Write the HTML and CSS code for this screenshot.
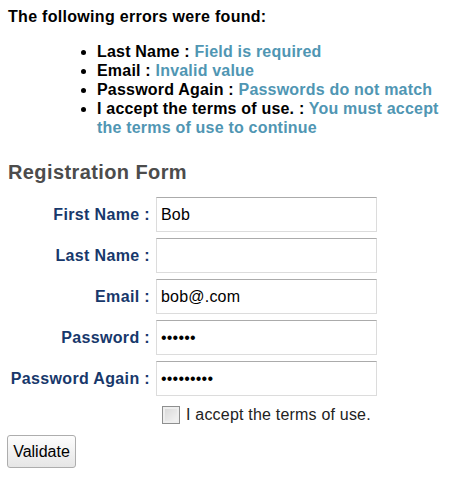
FILE: index.html
```html
<!DOCTYPE html>
<html>
<head>
<meta charset="utf-8">
<link rel="stylesheet" href="styles.css">
</head>
<body>
<div class="summary">
  <div class="summary-title">The following errors were found:</div>
  <ul class="error-list">
    <li><span class="field">Last Name :</span> <span class="msg">Field is required</span></li>
    <li><span class="field">Email :</span> <span class="msg">Invalid value</span></li>
    <li><span class="field">Password Again :</span> <span class="msg">Passwords do not match</span></li>
    <li><span class="field">I accept the terms of use. :</span> <span class="msg">You must accept the terms of use to continue</span></li>
  </ul>
</div>
<h2 class="form-title">Registration Form</h2>
<form class="form">
  <div class="grid">
    <label class="label">First Name :</label>
    <input class="field-input" type="text" value="Bob">
    <label class="label">Last Name :</label>
    <input class="field-input" type="text" value="">
    <label class="label">Email :</label>
    <input class="field-input" type="text" value="bob@.com">
    <label class="label">Password :</label>
    <input class="field-input" type="password" value="123456">
    <label class="label">Password Again :</label>
    <input class="field-input" type="password" value="123456789">
  </div>
  <div class="terms">
    <span class="checkbox"></span>
    <span class="terms-text">I accept the terms of use.</span>
  </div>
  <button class="btn" type="button">Validate</button>
</form>
</body>
</html>
```

FILE: styles.css
```css
html, body {
  margin: 0;
  padding: 0;
  background: #ffffff;
}
body {
  padding: 8px;
  font-family: "Liberation Sans", Arial, sans-serif;
  color: #000;
}
.summary-title {
  font-weight: bold;
  font-size: 16px;
  line-height: 18px;
  letter-spacing: 0.3px;
}
.error-list {
  margin: 16px 0 0 0;
  padding-left: 89px;
  font-size: 16px;
  line-height: 19px;
  font-weight: bold;
  letter-spacing: 0.2px;
  width: 350px;
}
.field {
  color: #000;
}
.msg {
  color: #5096b3;
}
.form-title {
  margin: 24px 0 0 0;
  font-size: 20px;
  line-height: 22px;
  font-weight: bold;
  letter-spacing: 0.4px;
  color: #4c4c4c;
}
.form {
  margin: 14px 0 0 0;
}
.grid {
  display: grid;
  grid-template-columns: 142px 221px;
  column-gap: 6px;
  row-gap: 6px;
  align-items: center;
}
.label {
  text-align: right;
  font-weight: bold;
  font-size: 16px;
  letter-spacing: 0.35px;
  color: #17386b;
}
.field-input {
  box-sizing: border-box;
  width: 221px;
  height: 35px;
  margin: 0;
  padding: 0 4px;
  border: 1px solid #dcdcdc;
  border-top-color: #ababab;
  font-family: "Liberation Sans", Arial, sans-serif;
  font-size: 16px;
  letter-spacing: 0.2px;
  color: #000;
  outline: none;
}
.terms {
  display: flex;
  align-items: center;
  gap: 6px;
  margin: 10px 0 0 154px;
  height: 18px;
}
.checkbox {
  box-sizing: border-box;
  width: 18px;
  height: 18px;
  border: 1px solid #8e8f8f;
  background: linear-gradient(135deg, #d6d6d6 0%, #f6f6f6 100%);
  box-shadow: inset 0 0 0 2px #eeeeee;
}
.terms-text {
  font-size: 16px;
  letter-spacing: 0.2px;
  color: #222;
}
.btn {
  margin: 11px 0 0 -1px;
  box-sizing: border-box;
  width: 69px;
  height: 33px;
  padding: 0;
  border: 1px solid #adadad;
  border-radius: 3px;
  background: linear-gradient(#fdfdfd, #e6e6e6);
  font-family: "Liberation Sans", Arial, sans-serif;
  font-size: 16px;
  color: #000;
  display: block;
}
```
